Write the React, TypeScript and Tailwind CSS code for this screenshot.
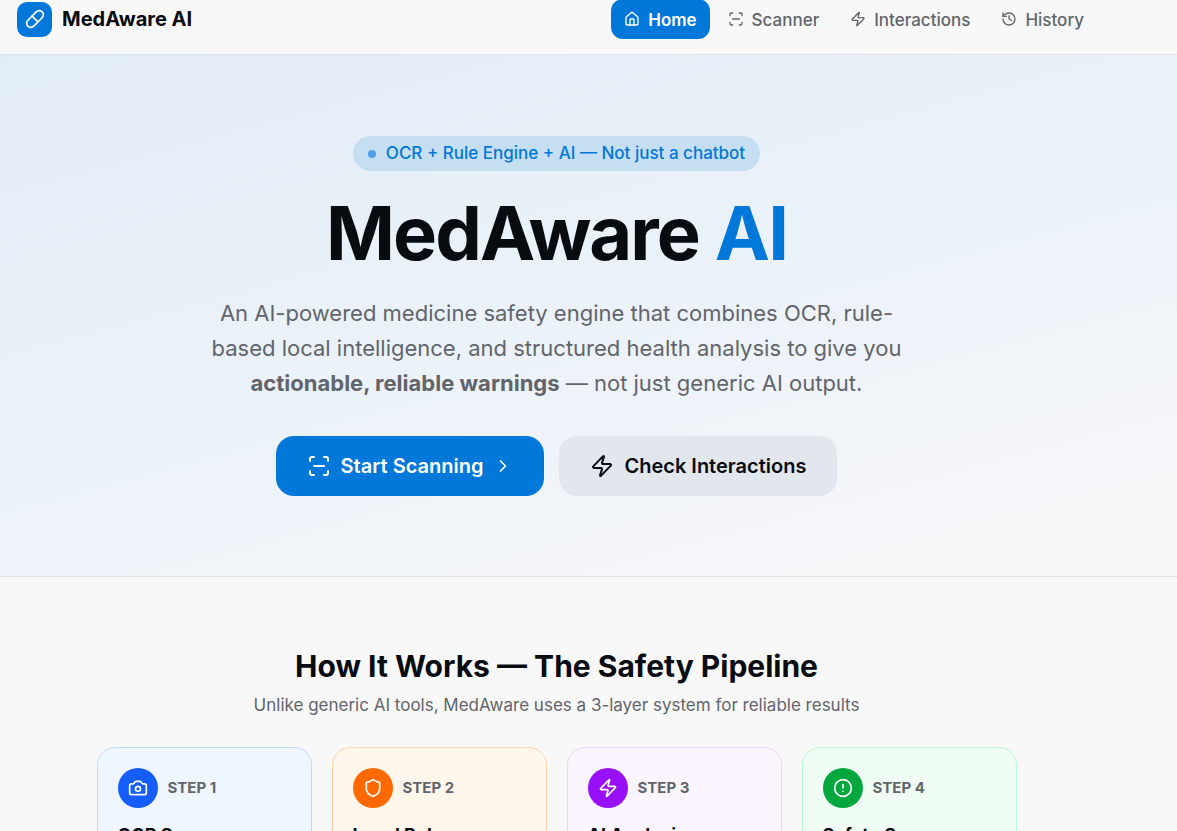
import React from 'react';
import { Camera, ChevronRight, CircleAlert, History, House, Pill, ScanLine, Shield, Zap } from 'lucide-react';
import type { LucideIcon } from 'lucide-react';

interface NavItem {
  label: string;
  icon: LucideIcon;
  active?: boolean;
}

interface Step {
  step: string;
  title: string;
  icon: LucideIcon;
  card: string;
  badge: string;
}

const navItems: NavItem[] = [
  { label: 'Home', icon: House, active: true },
  { label: 'Scanner', icon: ScanLine },
  { label: 'Interactions', icon: Zap },
  { label: 'History', icon: History },
];

const steps: Step[] = [
  { step: 'STEP 1', title: 'OCR Scan', icon: Camera, card: 'bg-blue-50 border-blue-200', badge: 'bg-[#155dfc]' },
  { step: 'STEP 2', title: 'Local Rules', icon: Shield, card: 'bg-[#fff6ec] border-[#ffd6a7]', badge: 'bg-[#ff6900]' },
  { step: 'STEP 3', title: 'AI Analysis', icon: Zap, card: 'bg-purple-50 border-purple-200', badge: 'bg-[#9810fa]' },
  { step: 'STEP 4', title: 'Safety Score', icon: CircleAlert, card: 'bg-green-50 border-green-200', badge: 'bg-[#00a63e]' },
];

const App: React.FC = () => {
  return (
    <div className="h-screen overflow-hidden bg-[#f8f8f8] font-['Inter',sans-serif] text-[#080b10]">

      {/* Header */}
      <header className="h-[55px] border-b border-[#dfe4e9] pb-4 pl-[17px] pr-20 flex items-center justify-between">
        <a href="#" className="flex items-center gap-[10px]">
          <span className="w-[35px] h-[35px] rounded-[10px] bg-[#0078d9] text-white flex items-center justify-center">
            <Pill className="w-5 h-5" />
          </span>
          <span className="text-[20px] font-bold">MedAware AI</span>
        </a>
        <nav className="flex items-center gap-[5px]">
          {navItems.map(({ label, icon: Icon, active }) => (
            <a
              key={label}
              href="#"
              className={`h-10 px-[13px] rounded-[12px] flex items-center gap-2 text-[17px] ${active ? 'bg-[#0078d9] text-white font-semibold' : 'text-[#61656b] font-medium'}`}
            >
              <Icon className="w-4 h-4" />
              <span className="pt-[3px]">{label}</span>
            </a>
          ))}
        </nav>
      </header>

      <main>
        {/* Hero */}
        <section className="border-b border-[#e4e6e9] bg-linear-165 from-[#e2ecf5] via-[#ecf2fa] to-[#f8f8f8] pr-16 pt-[81px] pb-20">
          <div className="max-w-[700px] mx-auto flex flex-col items-center text-center">
            <p className="h-[35px] px-[15px] rounded-full bg-[#c5def2] text-[#0078d9] text-[17px] font-medium flex items-center gap-[10px]">
              <span className="w-2 h-2 rounded-full bg-[#4c9ee5]" />
              OCR + Rule Engine + AI — Not just a chatbot
            </p>
            <h1 className="mt-[22px] text-[74px] leading-[80px] font-bold tracking-tight">
              MedAware <span className="text-[#0078d9]">AI</span>
            </h1>
            <p className="mt-[23px] text-[22px] leading-[35px] text-[#61656b]">
              An AI-powered medicine safety engine that combines OCR, rule-based local intelligence, and structured health analysis to give you{' '}
              <strong className="font-bold">actionable, reliable warnings</strong> — not just generic AI output.
            </p>
            <div className="mt-[35px] flex gap-[15px]">
              <button type="button" className="h-[60px] px-[31px] rounded-[18px] bg-[#0078d9] text-white text-[20px] font-semibold flex items-center gap-[10px]">
                <ScanLine className="w-6 h-6" />
                Start Scanning
                <ChevronRight className="w-5 h-5" />
              </button>
              <button type="button" className="h-[60px] px-[31px] rounded-[18px] bg-[#e2e6ed] text-[20px] font-semibold flex items-center gap-[10px]">
                <Zap className="w-6 h-6" />
                Check Interactions
              </button>
            </div>
          </div>
        </section>

        {/* Safety pipeline */}
        <section className="pt-[69px] pr-16">
          <div className="max-w-[920px] mx-auto">
            <div className="text-center">
              <h2 className="text-[30px] leading-10 font-bold">How It Works — The Safety Pipeline</h2>
              <p className="mt-1 text-[17px] leading-[30px] text-[#61656b]">
                Unlike generic AI tools, MedAware uses a 3-layer system for reliable results
              </p>
            </div>
            <div className="mt-[27px] grid grid-cols-4 gap-5">
              {steps.map(({ step, title, icon: Icon, card, badge }) => (
                <article key={step} className={`rounded-[18px] border p-5 ${card}`}>
                  <div className="flex items-center gap-[10px]">
                    <span className={`w-10 h-10 rounded-full text-white flex items-center justify-center ${badge}`}>
                      <Icon className="w-5 h-5" />
                    </span>
                    <span className="text-[15px] font-bold text-[#61656b]">{step}</span>
                  </div>
                  <h3 className="mt-[15px] text-[18px] leading-6 font-bold">{title}</h3>
                </article>
              ))}
            </div>
          </div>
        </section>
      </main>
    </div>
  );
};

export default App;
